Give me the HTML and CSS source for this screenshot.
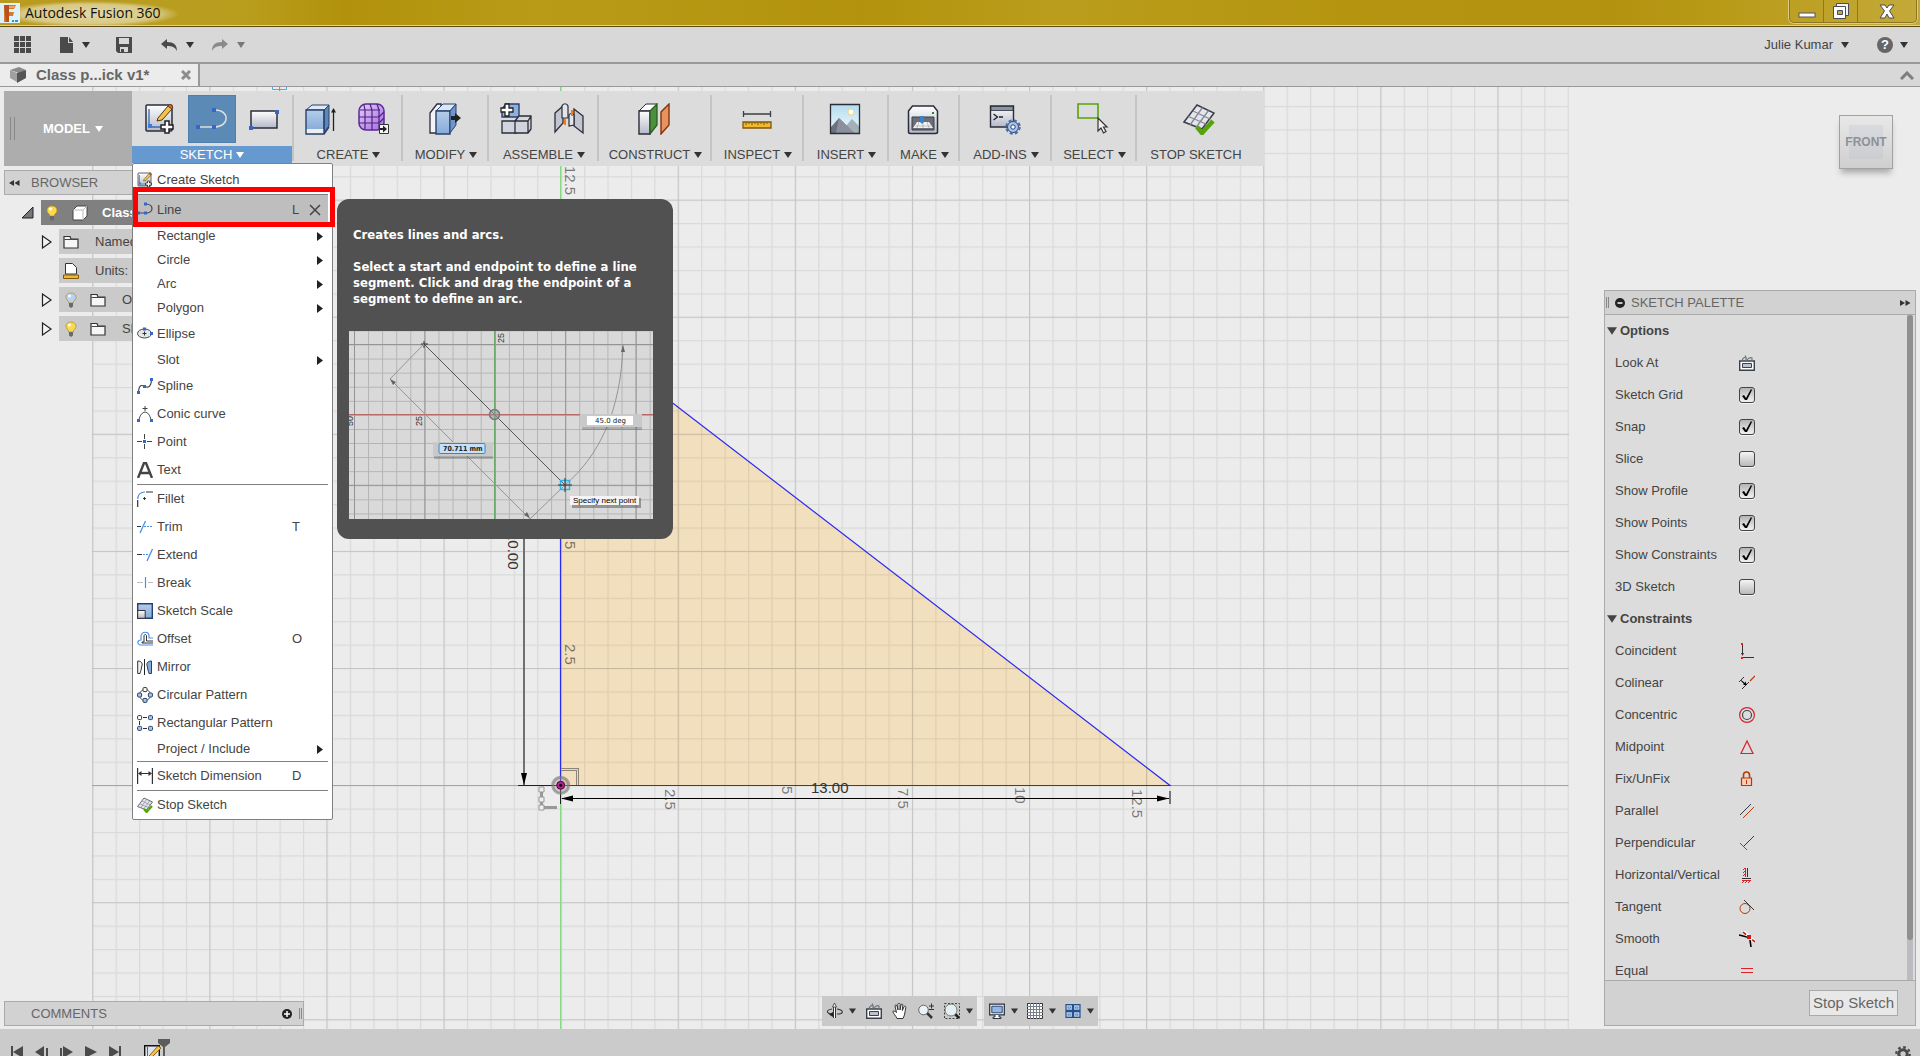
FILE: index.html
```html
<!DOCTYPE html>
<html lang="en">
<head>
<meta charset="utf-8">
<title>Autodesk Fusion 360</title>
<link rel="stylesheet" href="styles.css">
</head>
<body>
<svg class="defs" aria-hidden="true">
  <defs>
    <linearGradient id="gBlue" x1="0" y1="0" x2="0" y2="1"><stop offset="0" stop-color="#b4cdea"/><stop offset="1" stop-color="#86abd9"/></linearGradient>
    <linearGradient id="gGrey" x1="0" y1="0" x2="0" y2="1"><stop offset="0" stop-color="#ffffff"/><stop offset="1" stop-color="#b4b8c8"/></linearGradient>
    <linearGradient id="gSky" x1="0" y1="0" x2="0" y2="1"><stop offset="0" stop-color="#b4dcf0"/><stop offset="1" stop-color="#f2f9fc"/></linearGradient>
    <linearGradient id="gViolet" x1="0" y1="0" x2="1" y2="1"><stop offset="0" stop-color="#e6ccfa"/><stop offset="1" stop-color="#a56be0"/></linearGradient>
    <symbol id="caret" viewBox="0 0 8 6"><path d="M0 0h8L4 6z" fill="currentColor"/></symbol>
    <symbol id="sub" viewBox="0 0 6 9"><path d="M0 0v9l6-4.500z" fill="#222"/></symbol>
    <symbol id="sketch" viewBox="0 0 32 32">
      <rect x="2" y="2" width="26" height="26" rx="1" fill="url(#gGrey)" stroke="#2b2e38" stroke-width="1.500"/>
      <path d="M5 6v18h12" fill="none" stroke="#3a6bb8" stroke-width="1.300"/><rect x="4" y="21" width="4" height="4" fill="#3b7be0"/>
      <path d="M14 15L24 3l4 3-10 11-5 1z" fill="#f6c445" stroke="#4a3517"/><path d="M24 3l4 3 1-2-3-3z" fill="#c66a3b" stroke="#6b3519" stroke-width=".8"/>
      <path d="M21 18h4v4h4v4h-4v4h-4v-4h-4v-4h4z" fill="#fff" stroke="#222" stroke-width="1.500"/>
    </symbol>
    <symbol id="line" viewBox="0 0 32 32">
      <path d="M2 24h16c16 0 16-17 1-17" fill="none" stroke="currentColor" stroke-width="1.500"/>
      <path d="M0 22h4v4H0zM16 22h4v4h-4zM16 5h4v4h-4z" fill="#3567c9"/>
    </symbol>
    <symbol id="line-small" viewBox="0 0 16 16">
      <path d="M1 11h8c8 0 8-9 0-9" fill="none" stroke="#444" stroke-width="1.200"/>
      <path d="M0 9.500h3v3H0zM7 9.500h3v3H7zM7 .5h3v3H7z" fill="#3567c9"/>
    </symbol>
    <symbol id="stop" viewBox="0 0 32 32">
      <path d="M14 2l17 8-12 16L1 19z" fill="#e3e6ec" stroke="#3b3e46" stroke-width="1.500"/>
      <path d="M19.500 4.500L7 22M25.500 7.500L13 24.500M10 8l17 8M5.500 13.500L23 21" stroke="#858a96" stroke-width="1.300" fill="none"/>
      <path d="M14 24l5 6L30 18" fill="none" stroke="#58a30a" stroke-width="4.500"/>
    </symbol>
    <symbol id="folder" viewBox="0 0 16 14">
      <path d="M1 13V1.500h6L8 4h7v9z" fill="#f6f6f8" stroke="#333" stroke-width="1.200"/><path d="M1.500 4.500h13" stroke="#444"/>
    </symbol>
    <symbol id="bulb" viewBox="0 0 12 16">
      <path d="M3.500 9.500C-1 6 1 1 6 1s7 5 2.500 8.500V11h-5z" fill="currentColor" stroke="#b08a2a" stroke-width=".7"/><circle cx="4.500" cy="4" r="1.600" fill="#fff"/><path d="M4 11h4v3.500L6 16l-2-1.500z" fill="#6a6a6a"/>
    </symbol>
    <symbol id="look" viewBox="0 0 16 16">
      <path d="M.7 6h14.600v9.300H.7z" fill="#fff" stroke="#3a414c" stroke-width="1.400"/><path d="M3.500 8.500h9v4h-9z" fill="#bcc3cd" stroke="#3a414c"/><path d="M3 5.500C4 2.500 6 2 7 2.500L6 .5M7 2.500v3M8 5c2-2.500 4-2.500 5-2v3" fill="none" stroke="#68727e" stroke-width="1.100"/>
    </symbol>
  </defs>
</svg>

<header class="titlebar">
  <svg class="app-logo" viewBox="0 0 20 20"><rect width="20" height="20" fill="#dff1f8"/><path d="M4 2h12l-2 4H9v3h5l-1 4H9v6H4z" fill="#d9772c"/><path d="M4 2h5v17H6z" fill="#b4541c"/><path d="M9 3h6l-1 2H9z" fill="#f4a45f"/><path d="M12 17h2v2h-2zM15 17h3v2h-3z" fill="#1f9be0"/></svg>
  <h1 class="app-title">Autodesk Fusion 360</h1>
  <div class="window-controls">
    <button class="win" aria-label="Minimize"><svg width="18" height="6"><rect x="1" y="1" width="16" height="4" fill="#fff" stroke="#55545c"/></svg></button>
    <button class="win" aria-label="Restore"><svg width="18" height="18"><path d="M4.500 1.500h12v12h-12z" fill="#f2f2f2" stroke="#4b4a5c"/><path d="M1.500 4.500h12v12h-12z" fill="#fff" stroke="#4b4a5c"/><path d="M5.500 8.500h5v4h-5z" fill="#c4a535" stroke="#4b4a5c"/></svg></button>
    <button class="win win-close" aria-label="Close"><svg width="16" height="15"><path d="M1 1h5l2 3 2-3h5l-4.500 6L15 14h-5l-2-4-2 4H1l4.500-7z" fill="#fff" stroke="#4b4a5c"/></svg></button>
  </div>
</header>

<nav class="appbar">
  <button class="app-btn" aria-label="Data panel"><svg width="17" height="17" fill="#4a4a4a"><path d="M0 0h5v5H0zM6 0h5v5H6zM12 0h5v5h-5zM0 6h5v5H0zM6 6h5v5H6zM12 6h5v5h-5zM0 12h5v5H0zM6 12h5v5H6zM12 12h5v5h-5z"/></svg></button>
  <button class="app-btn file" aria-label="File"><svg width="14" height="16" fill="#4a4a4a"><path d="M0 0h8v6h5v10H0zM9 0l4 5H9z"/></svg><svg class="caret"><use href="#caret"/></svg></button>
  <button class="app-btn save" aria-label="Save"><svg width="16" height="16"><path d="M0 0h16v16H2l-2-2z" fill="#4a4a4a"/><path d="M3 1h10v6H3zM4 10h8v5H4z" fill="#d8d8d8"/><path d="M5 12h3v3H5z" fill="#4a4a4a"/></svg></button>
  <button class="app-btn undo" aria-label="Undo"><svg width="16" height="12"><path d="M0 5l6-5v3c7 0 10 3 10 9-2-4-5-5-10-5v3z" fill="#4a4a4a"/></svg><svg class="caret"><use href="#caret"/></svg></button>
  <button class="app-btn redo" aria-label="Redo"><svg width="16" height="12"><path d="M16 5l-6-5v3C3 3 0 6 0 12c2-4 5-5 10-5v3z" fill="#8a8a8a"/></svg><svg class="caret"><use href="#caret"/></svg></button>
  <button class="app-btn user">Julie Kumar <svg class="caret"><use href="#caret"/></svg></button>
  <button class="app-btn help" aria-label="Help"><span class="help-mark">?</span><svg class="caret"><use href="#caret"/></svg></button>
</nav>

<div class="tabs">
  <div class="tab">
    <svg width="16" height="16"><path d="M0 3l9-3 7 3-7 3z" fill="#8b8b8b"/><path d="M0 3l7 3v9L0 11z" fill="#a0a0a0"/><path d="M7 6l9-3v8l-9 5z" fill="#555"/></svg>
    <span class="tab-name">Class p...ick v1*</span>
    <button class="tab-close" aria-label="Close tab"><svg width="10" height="10"><path d="M1 1l8 8M9 1L1 9" stroke="#8c8c8c" stroke-width="3"/></svg></button>
  </div>
  <button class="collapse" aria-label="Collapse"><svg width="14" height="9"><path d="M1 8l6-6 6 6" fill="none" stroke="#7e7e7e" stroke-width="3"/></svg></button>
</div>

<main class="workspace">
  <svg class="canvas" role="img" aria-label="Sketch canvas">
    <defs>
      <pattern id="minor" x="92.200" y="82.500" width="23.420" height="23.420" patternUnits="userSpaceOnUse"><path d="M.5 0v23.420M0 .5h23.420" stroke="#000" stroke-opacity=".08" stroke-width="1.400"/></pattern>
      <pattern id="major" x="92.200" y="82.500" width="117.100" height="117.100" patternUnits="userSpaceOnUse"><path d="M.5 0v117.100M0 .5h117.100" stroke="#000" stroke-opacity=".1" stroke-width="1.200"/></pattern>
    </defs>
    <g transform="translate(0 -87)">
      <path d="M560.700 316.700V785.300H1170z" fill="#f2dfbe"/>
      <rect x="92" y="80" width="1477" height="960" fill="url(#minor)"/>
      <rect x="92" y="80" width="1477" height="960" fill="url(#major)"/>
      <path d="M92 785.500h1476" stroke="#e58a8a"/>
      <path d="M560.500 87v942" stroke="#86d886"/>
      <path d="M560.500 785.500V316.700L1170 785.500z" fill="none" stroke="#2a2af0" stroke-width="1.200"/>
      <path d="M272.500 80v9.500h14V80M279.500 80v11" fill="none" stroke="#35b5e8"/>
      <path d="M524 317v468" stroke="#707070" stroke-width="2"/>
      <path d="M521 773h6l-3 12z"/>
      <path d="M518 785.500h43M560.500 785v19" stroke="#222"/>
      <path d="M562 798.500h608" stroke="#000"/>
      <path d="M561 798.500l12-3v6zM1169 798.500l-12-3v6z"/>
      <path d="M1170 791v13" stroke="#777" stroke-width="2"/>
      <path d="M561 769.500h16.500V785" fill="none" stroke="#8d8576" stroke-width="3"/>
      <path d="M561 769.500h16.500V785" fill="none" stroke="#e2dccf"/>
      <path d="M541.500 789v20M541 807.500h16" stroke="#999" stroke-width="3"/>
      <path d="M539 787h5v5h-5zM539 797h5v5h-5zM539 805h5v5h-5z" fill="#eee" stroke="#999"/>
      <circle cx="560.700" cy="785.300" r="8" fill="#999" fill-opacity=".4" stroke="#777" stroke-opacity=".6" stroke-width="3"/>
      <circle cx="560.700" cy="785.300" r="4" fill="#c2189a" stroke="#40102e"/><circle cx="560.700" cy="785.300" r="1.500"/>
      <g class="grid-label">
        <text transform="translate(565 166) rotate(90)">12.5</text>
        <text transform="translate(565 541) rotate(90)">5</text>
        <text transform="translate(565 644) rotate(90)">2.5</text>
        <text transform="translate(665 789) rotate(90)">2.5</text>
        <text transform="translate(782 786) rotate(90)">5</text>
        <text transform="translate(898 788) rotate(90)">7.5</text>
        <text transform="translate(1015 787) rotate(90)">10</text>
        <text transform="translate(1132 789) rotate(90)">12.5</text>
      </g>
      <g class="dim-label">
        <text transform="translate(508 532) rotate(90)">10.00</text>
        <text x="811" y="793">13.00</text>
      </g>
    </g>
  </svg>

  <div class="toolbar">
    <button class="mode">MODEL <svg class="caret"><use href="#caret"/></svg></button>
    <section class="group g-sketch">
      <div class="tools">
        <button class="tool" aria-label="Create sketch"><svg class="ico"><use href="#sketch"/></svg></button>
        <button class="tool active" aria-label="Line"><svg class="ico"><use href="#line"/></svg></button>
        <button class="tool" aria-label="Rectangle"><svg class="ico" viewBox="0 0 32 32"><rect x="3" y="8" width="26" height="17" fill="url(#gGrey)" stroke="#2b2e38" stroke-width="1.500"/><path d="M1 23h4v4H1zM27 7h4v4h-4z" fill="#3567c9"/></svg></button>
      </div>
      <button class="group-name open">SKETCH<svg class="caret"><use href="#caret"/></svg></button>

      <ul class="menu">
        <li class="item"><svg class="mi"><use href="#sketch"/></svg><button>Create Sketch</button></li>
        <li class="item current">
          <svg class="mi"><use href="#line-small"/></svg><button>Line</button><kbd>L</kbd>
          <svg class="pin" viewBox="0 0 12 12"><path d="M1 1l10 10M11 1L1 11" stroke="#444" stroke-width="1.500"/></svg>
          <span class="marker"></span>
          <aside class="tooltip">
            <p>Creates lines and arcs.</p>
            <p>Select a start and endpoint to define a line segment. Click and drag the endpoint of a segment to define an arc.</p>
            <svg class="demo" viewBox="0 0 304 188">
              <defs>
                <pattern id="dminor" x="5" y="13.500" width="14.080" height="14.080" patternUnits="userSpaceOnUse"><path d="M.5 0v14.080M0 .5h14.080" stroke="#b4b4b4"/></pattern>
                <pattern id="dmajor" x="5" y="13" width="70.400" height="70.400" patternUnits="userSpaceOnUse"><path d="M.5 0v70.400M0 .5h70.400" stroke="#949494"/></pattern>
              </defs>
              <rect width="304" height="188" fill="#d9d9d9"/><rect width="304" height="188" fill="url(#dminor)"/><rect width="304" height="188" fill="url(#dmajor)"/>
              <path d="M0 83.500h304" stroke="#b86a6a"/><path d="M145.500 0v188" stroke="#6aa96a"/>
              <path d="M75 13l141 141" stroke="#555"/><path d="M72 13h7M75 10v7" stroke="#333"/>
              <path d="M75 13L41 48l140 140 35-34C250 125 272 80 274 14" fill="none" stroke="#959595"/>
              <path d="M41 48l6 3-3 3zM181 187l-6-3 3-3zM274 14l-2 7h4z" fill="#666"/>
              <circle cx="145.500" cy="83.500" r="5" fill="#999" fill-opacity=".6" stroke="#777" stroke-width="1.500"/>
              <path d="M211.500 149.500h9v9h-9z" fill="none" stroke="#2fb4e8" stroke-width="1.500"/><path d="M209 154h14M216 147v14" stroke="#333"/>
              <g class="demo-num"><text transform="translate(155 12) rotate(-90)">25</text><text transform="translate(73 95) rotate(-90)">25</text><text transform="translate(4 95) rotate(-90)">50</text></g>
              <path d="M85 114h59v14H85zM233 86h60v13h-60z" fill="#000" fill-opacity=".2"/>
              <path d="M84 111h60v14H84zM231 83h62v13h-62z" fill="#c9c9c9"/>
              <rect x="90" y="112.500" width="46" height="10" rx="1" fill="#c4e0fb" stroke="#3f83c4"/><rect x="238" y="85" width="46" height="9" fill="#fff"/>
              <rect x="223" y="167" width="69" height="10" fill="#666" fill-opacity=".6"/><rect x="221" y="165" width="69" height="9" fill="#f4f4f4"/>
              <g class="demo-text"><text class="demo-strong" x="94" y="120">70.711 mm</text><text x="246" y="92">45.0 deg</text><text class="demo-hint" x="224" y="172">Specify next point</text></g>
            </svg>
          </aside>
        </li>
        <li class="item plain"><button>Rectangle</button><svg class="sub"><use href="#sub"/></svg></li>
        <li class="item plain"><button>Circle</button><svg class="sub"><use href="#sub"/></svg></li>
        <li class="item plain"><button>Arc</button><svg class="sub"><use href="#sub"/></svg></li>
        <li class="item plain"><button>Polygon</button><svg class="sub"><use href="#sub"/></svg></li>
        <li class="item"><svg class="mi" viewBox="0 0 16 16"><ellipse cx="7.500" cy="7.500" rx="7" ry="4.500" fill="#e4e6ea" stroke="#444"/><path d="M5.500 7.500h4M7.500 5.500v4" stroke="#333"/><path d="M6 1.500h3v3H6zM13 6h3v3h-3z" fill="#3567c9"/></svg><button>Ellipse</button></li>
        <li class="item plain"><button>Slot</button><svg class="sub"><use href="#sub"/></svg></li>
        <li class="item"><svg class="mi" viewBox="0 0 16 16"><path d="M1.500 14C2 6 5 7 8 8.500S14 9 14.500 2" fill="none" stroke="#444" stroke-width="1.200"/><path d="M0 13h3v3H0zM6 7h3v3H6zM13 0h3v3h-3z" fill="#3567c9"/></svg><button>Spline</button></li>
        <li class="item"><svg class="mi" viewBox="0 0 16 16"><path d="M2 14C4 3.500 12 3.500 14 14" fill="none" stroke="#444"/><path d="M5.500 2.500h5M8 0v5" stroke="#444"/><path d="M0 13h3v3H0zM13 13h3v3h-3z" fill="#3567c9"/></svg><button>Conic curve</button></li>
        <li class="item"><svg class="mi" viewBox="0 0 16 16"><path d="M0 7.500h5M10 7.500h5M7.500 0v5M7.500 10v5" stroke="#444"/><path d="M6 6h3v3H6z" fill="#3567c9"/></svg><button>Point</button></li>
        <li class="item"><svg class="mi" viewBox="0 0 16 16"><path d="M1 16L7 1h2l6 15M3.500 11h9" fill="none" stroke="#444" stroke-width="2.400"/></svg><button>Text</button></li>
        <li class="rule"></li>
        <li class="item"><svg class="mi" viewBox="0 0 16 16"><path d="M.7 9v7M9 1h7" stroke="#333" stroke-width="1.200"/><path d="M.7 8C1 3 3 1 8 1" fill="none" stroke="#4a8fe8" stroke-width="1.200"/><path d="M6 7.500h3M7.500 6v3" stroke="#333"/></svg><button>Fillet</button></li>
        <li class="item"><svg class="mi" viewBox="0 0 16 16"><path d="M0 7.500h4" stroke="#333"/><path d="M3 14L8.500 2" stroke="#4a8fe8" stroke-width="1.300"/><path d="M7 7.500h9" stroke="#4a8fe8" stroke-dasharray="2 1"/></svg><button>Trim</button><kbd>T</kbd></li>
        <li class="item"><svg class="mi" viewBox="0 0 16 16"><path d="M0 7.500h5" stroke="#333"/><path d="M10 14l5.500-12" stroke="#4a8fe8" stroke-width="1.300"/><path d="M6 7.500h6" stroke="#4a8fe8" stroke-dasharray="2 1"/></svg><button>Extend</button></li>
        <li class="item"><svg class="mi" viewBox="0 0 16 16"><path d="M0 7.500h6M11 7.500h5" stroke="#bbb"/><path d="M8.500 2v11" stroke="#4a8fe8" stroke-width="1.200"/></svg><button>Break</button></li>
        <li class="item"><svg class="mi" viewBox="0 0 16 16"><path d="M.7 .7h14.600v14.600H.7z" fill="url(#gBlue)" stroke="#28406e" stroke-width="1.400"/><path d="M.7 7.500h7.500v7.800H.7z" fill="url(#gGrey)" stroke="#333"/></svg><button>Sketch Scale</button></li>
        <li class="item"><svg class="mi" viewBox="0 0 16 16"><path d="M16 14H3c-3-1-3-5 1-5V5c1-5 8-5 8 0v2h4" fill="none" stroke="#4a8fe8" stroke-width="1.200"/><path d="M16 12H5v-1h2V5c0-2 2.500-2 2.500 0v5H16" fill="none" stroke="#333"/></svg><button>Offset</button><kbd>O</kbd></li>
        <li class="item"><svg class="mi" viewBox="0 0 16 16"><path d="M.7 2C5 2 6 5 4.500 8c0 3-1 4-1.500 6.500H.7z" fill="#f2f2f2" stroke="#333"/><path d="M7.500 0v16" stroke="#222"/><path d="M14.500 2C10 2 9 5 10.500 8c0 3 1 4 1.500 6.500h2.500z" fill="#86abd9" stroke="#28406e"/></svg><button>Mirror</button></li>
        <li class="item"><svg class="mi" viewBox="0 0 16 16"><circle cx="8" cy="8" r="5.500" fill="none" stroke="#555"/><g stroke="#28406e" fill="#a9c5e8"><rect x=".6" y="6" width="4" height="4" rx="1"/><rect x="11.400" y="6" width="4" height="4" rx="1"/><rect x="6" y="11.400" width="4" height="4" rx="1"/><rect x="6" y=".6" width="4" height="4" rx="1" fill="#fff" stroke="#333"/></g></svg><button>Circular Pattern</button></li>
        <li class="item"><svg class="mi" viewBox="0 0 16 16"><path d="M6 2.500h4M2.500 6v4M6 13.500h4" stroke="#333"/><g stroke="#28406e" fill="#a9c5e8"><rect x="11.500" y=".6" width="4" height="4" rx="1"/><rect x=".6" y="11.400" width="4" height="4" rx="1"/><rect x="11.500" y="11.400" width="4" height="4" rx="1"/><rect x=".6" y=".6" width="4" height="4" rx="1" fill="#fff" stroke="#333"/></g></svg><button>Rectangular Pattern</button></li>
        <li class="item plain"><button>Project / Include</button><svg class="sub"><use href="#sub"/></svg></li>
        <li class="rule"></li>
        <li class="item"><svg class="mi" viewBox="0 0 16 16"><path d="M.6 0v16M15.400 0v16M2 5.500h12" stroke="#333" stroke-width="1.200"/><path d="M1 5.500L4.500 3v5zM15 5.500L11.500 3v5z" fill="#333"/></svg><button>Sketch Dimension</button><kbd>D</kbd></li>
        <li class="rule"></li>
        <li class="item"><svg class="mi"><use href="#stop"/></svg><button>Stop Sketch</button></li>
      </ul>
    </section>
    <section class="group g-create">
      <div class="tools">
        <button class="tool" aria-label="Extrude"><svg class="ico" viewBox="0 0 32 32"><path d="M1 7l6-5h17l-5 5z" fill="#dfeaf7" stroke="#28406e"/><path d="M1 7h18v20H1z" fill="url(#gBlue)"/><path d="M19 7l5-5v21l-5 6z" fill="#5f86b8" stroke="#28406e"/><path d="M1 26h18v5H1z" fill="#eee"/><path d="M1 31V7h18v24zM19 31l5-7" fill="none" stroke="#28406e" stroke-width="1.400"/><path d="M28.500 28V7" stroke="#222" stroke-width="1.300"/><path d="M26 9.500L28.500 5 31 9.500z" fill="#222"/></svg></button>
        <button class="tool" aria-label="Form"><svg class="ico" viewBox="0 0 32 32"><rect x="2" y="1" width="25" height="26" rx="7" fill="url(#gViolet)" stroke="#5b2a96" stroke-width="1.500"/><path d="M2 14h20l5-5M3 7h20M8 7v19M15 7v20M22 7v19M7 2l1 5M13 1l2 6M20 1l2 6M2 20h20l5-5" stroke="#4a2480" fill="none" stroke-width="1.200"/><path d="M22.500 21.500h9v9h-9z" fill="#f4f4f4" stroke="#333"/><path d="M23 25h3v-2.500L30 26l-4 3.500V27h-3z" fill="#222"/></svg></button>
      </div>
      <button class="group-name">CREATE<svg class="caret"><use href="#caret"/></svg></button>
    </section>
    <section class="group g-modify">
      <div class="tools"><button class="tool" aria-label="Press pull"><svg class="ico" viewBox="0 0 32 32"><path d="M1 10l7-9h4v29H1z" fill="#f3f4f7" stroke="#2b2e38" stroke-width="1.300"/><path d="M7 8l7-7h13l-6 7z" fill="#dbe7f5" stroke="#28406e"/><path d="M7 8h14v23H7z" fill="url(#gBlue)" stroke="#28406e" stroke-width="1.400"/><path d="M21 8l6-7v21l-6 8z" fill="#6f96c8" stroke="#28406e"/><path d="M22 13h4v-3l6 5-6 5v-3h-4z" fill="#222"/></svg></button></div>
      <button class="group-name">MODIFY<svg class="caret"><use href="#caret"/></svg></button>
    </section>
    <section class="group g-assemble">
      <div class="tools">
        <button class="tool" aria-label="New component"><svg class="ico" viewBox="0 0 32 32"><path d="M2 6l4-5h13v13H2z" fill="#8fb0df" stroke="#28406e" stroke-width="1.400"/><path d="M2 18h14v12H2z" fill="#d3d5de" stroke="#2b2e38" stroke-width="1.300"/><path d="M15 18l4-5h12v13l-3 4H15zM15 18h13l3-5M28 18v12" fill="#d3d5de" stroke="#2b2e38" stroke-width="1.300"/><path d="M5 1h4v4h4v4H9v4H5V9H1V5h4z" fill="#fff" stroke="#222" stroke-width="1.300"/></svg></button>
        <button class="tool" aria-label="Joint"><svg class="ico" viewBox="0 0 32 32"><path d="M2 10l8-7v17l-8 9z" fill="#c2c6d0" stroke="#2b2e38" stroke-width="1.300"/><path d="M9 3c1-3 5-3 6 0v12H9z" fill="#e3e5ea" stroke="#2b2e38" stroke-width="1.200"/><path d="M21 6l9 7v17l-9-7z" fill="#c2c6d0" stroke="#2b2e38" stroke-width="1.300"/><path d="M16 12c1-2 4-2 5 0v10l-5 1z" fill="#e3e5ea" stroke="#2b2e38" stroke-width="1.200"/><path d="M12 16v6M19 7v6" stroke="#f47a14" stroke-width="2"/></svg></button>
      </div>
      <button class="group-name">ASSEMBLE<svg class="caret"><use href="#caret"/></svg></button>
    </section>
    <section class="group g-construct">
      <div class="tools"><button class="tool" aria-label="Offset plane"><svg class="ico" viewBox="0 0 32 32"><path d="M1 8l7-7h11l-7 7z" fill="#fff" stroke="#2b2e38"/><path d="M1 8h11v23H1z" fill="url(#gGrey)" stroke="#2b2e38" stroke-width="1.400"/><path d="M12 8l7-7v21l-7 9z" fill="#4c8f3c" stroke="#2f5a22" stroke-width="1.300"/><path d="M23 9l8-8v21l-8 9z" fill="#e8935e" stroke="#82330d" stroke-width="1.400"/></svg></button></div>
      <button class="group-name">CONSTRUCT<svg class="caret"><use href="#caret"/></svg></button>
    </section>
    <section class="group g-inspect">
      <div class="tools"><button class="tool" aria-label="Measure"><svg class="ico" viewBox="0 0 32 32"><path d="M2.500 8v6M29.500 8v6M3 11h26" stroke="#3b3e46" stroke-width="1.300"/><path d="M2 19h28v6H2z" fill="#eeb92c" stroke="#83560a" stroke-width="1.300"/><path d="M5 19v3M8 19v2M11 19v3M14 19v2M17 19v3M20 19v2M23 19v3M26 19v2" stroke="#83560a"/></svg></button></div>
      <button class="group-name">INSPECT<svg class="caret"><use href="#caret"/></svg></button>
    </section>
    <section class="group g-insert">
      <div class="tools"><button class="tool" aria-label="Insert decal"><svg class="ico" viewBox="0 0 32 32"><path d="M1.500 1.500h29v29h-29z" fill="url(#gSky)"/><circle cx="22" cy="9" r="3" fill="#fff" stroke="#f5d670"/><path d="M16 24l7-8 7 7v8H16z" fill="#a3b0b8"/><path d="M2 24l8-9 15 15H2z" fill="#6c7180"/><path d="M10 15l-3 15h18z" fill="#8c909c"/><path d="M1.500 1.500h29v29h-29z" fill="none" stroke="#2b2e38" stroke-width="1.300"/></svg></button></div>
      <button class="group-name">INSERT<svg class="caret"><use href="#caret"/></svg></button>
    </section>
    <section class="group g-make">
      <div class="tools"><button class="tool" aria-label="3D print"><svg class="ico" viewBox="0 0 32 32"><path d="M1.500 8l4-5h21l4 5v21q0 1.500-2 1.500h-25q-2 0-2-1.500z" fill="url(#gGrey)" stroke="#2b2e38" stroke-width="1.500"/><path d="M5 14h22v13H5z" fill="#6b6e77" stroke="#3b3e46"/><path d="M10 19h12l4 6H6z" fill="#f2f2f4"/><path d="M8 23h16M12 19l-2 6M16 19v6M20 19l2 6" stroke="#aaa" stroke-width=".7"/><path d="M13 13h4v6l-2 2-2-2z" fill="#3b82c8"/><path d="M25 9h2v2h-2z" fill="#1c8a1c"/></svg></button></div>
      <button class="group-name">MAKE<svg class="caret"><use href="#caret"/></svg></button>
    </section>
    <section class="group g-addins">
      <div class="tools"><button class="tool" aria-label="Scripts and add-ins"><svg class="ico" viewBox="0 0 32 32"><path d="M1.500 3h23v21h-23z" fill="url(#gGrey)" stroke="#2b2e38" stroke-width="1.400"/><path d="M2 3.500h22v4H2z" fill="#8b93a6" stroke="#2b2e38" stroke-width=".8"/><path d="M4.500 11l4 3-4 3M10 14h4" stroke="#222" fill="none" stroke-width="1.300"/><circle cx="24" cy="24" r="5.500" fill="#a9c5e8" stroke="#28406e"/><circle cx="24" cy="24" r="6.500" fill="none" stroke="#4a6ea8" stroke-width="2.500" stroke-dasharray="3 2.100"/><circle cx="24" cy="24" r="2.200" fill="#fff" stroke="#28406e"/></svg></button></div>
      <button class="group-name">ADD-INS<svg class="caret"><use href="#caret"/></svg></button>
    </section>
    <section class="group g-select">
      <div class="tools"><button class="tool" aria-label="Select"><svg class="ico" viewBox="0 0 32 32"><path d="M1 1h20v14H1z" fill="none" stroke="#58a30a" stroke-width="1.600"/><path d="M21 15v13l3-3 2.500 5 2.500-1.500-2.500-4.500H30z" fill="#f0f0f0" stroke="#333" stroke-width="1.200"/></svg></button></div>
      <button class="group-name">SELECT<svg class="caret"><use href="#caret"/></svg></button>
    </section>
    <section class="group g-stop">
      <div class="tools"><button class="tool" aria-label="Stop sketch"><svg class="ico"><use href="#stop"/></svg></button></div>
      <button class="group-name">STOP SKETCH</button>
    </section>
  </div>

  <section class="browser">
    <h2 class="bar"><svg width="11" height="6"><path d="M5 0v6L0 3zM10.500 0v6l-5-3z" fill="#333"/></svg>BROWSER</h2>
    <ul class="tree">
      <li class="node root"><svg class="twist" viewBox="0 0 12 12"><path d="M11 0v11H0z" fill="#777" stroke="#222"/></svg><div class="row"><svg class="bulb on"><use href="#bulb"/></svg><svg class="cube" viewBox="0 0 16 16"><path d="M1 5l4-4h10v10l-4 4H1z" fill="#fff" stroke="#444"/><path d="M1 5h10l4-4M11 5v10" stroke="#bbb" fill="none"/></svg><b>Class project stick v1</b></div></li>
      <li class="node"><svg class="twist" viewBox="0 0 12 14"><path d="M1.500 1v12L10 7z" fill="#f4f4f4" stroke="#222" stroke-width="1.200"/></svg><div class="row"><svg class="folder"><use href="#folder"/></svg><span>Named Views</span></div></li>
      <li class="node leaf"><div class="row"><svg class="folder" viewBox="0 0 16 16"><path d="M2.500 11V.5h7l4 4V11z" fill="#fff" stroke="#333"/><path d="M.5 12h15v3.500H.5z" fill="#f0bb2a" stroke="#83560a"/></svg><span>Units: in</span></div></li>
      <li class="node"><svg class="twist" viewBox="0 0 12 14"><path d="M1.500 1v12L10 7z" fill="#f4f4f4" stroke="#222" stroke-width="1.200"/></svg><div class="row lit"><svg class="bulb off"><use href="#bulb"/></svg><svg class="folder"><use href="#folder"/></svg><span>Origin</span></div></li>
      <li class="node"><svg class="twist" viewBox="0 0 12 14"><path d="M1.500 1v12L10 7z" fill="#f4f4f4" stroke="#222" stroke-width="1.200"/></svg><div class="row lit"><svg class="bulb on"><use href="#bulb"/></svg><svg class="folder"><use href="#folder"/></svg><span>Sketches</span></div></li>
    </ul>
  </section>

  <div class="side">
    <button class="viewcube">FRONT</button>
    <section class="palette">
      <h2 class="bar palette-bar"><span class="grip"></span><svg width="10" height="10"><circle cx="5" cy="5" r="5" fill="#222"/><path d="M2.500 5h5" stroke="#fff" stroke-width="1.500"/></svg>SKETCH PALETTE<svg class="expand" width="11" height="6"><path d="M0 0v6l5-3zM5.500 0v6l5-3z" fill="#333"/></svg></h2>
      <div class="palette-body">
        <div class="palette-list">
          <h3><svg class="fold"><use href="#caret"/></svg>Options</h3>
          <div class="opt"><span>Look At</span><button aria-label="Look At"><svg class="ci"><use href="#look"/></svg></button></div>
          <div class="opt"><label for="o1">Sketch Grid</label><input type="checkbox" id="o1" checked></div>
          <div class="opt"><label for="o2">Snap</label><input type="checkbox" id="o2" checked></div>
          <div class="opt"><label for="o3">Slice</label><input type="checkbox" id="o3"></div>
          <div class="opt"><label for="o4">Show Profile</label><input type="checkbox" id="o4" checked></div>
          <div class="opt"><label for="o5">Show Points</label><input type="checkbox" id="o5" checked></div>
          <div class="opt"><label for="o6">Show Constraints</label><input type="checkbox" id="o6" checked></div>
          <div class="opt"><label for="o7">3D Sketch</label><input type="checkbox" id="o7"></div>
          <h3><svg class="fold"><use href="#caret"/></svg>Constraints</h3>
          <div class="opt"><span>Coincident</span><button aria-label="Coincident"><svg class="ci" viewBox="0 0 16 16"><path d="M3.500 2v10M4 14.500h11" stroke="#333"/><path d="M2 10h3l-1.500 3z" fill="#333"/><path d="M2 0h2v2H2zM2 14h2v2H2z" fill="#e8220e"/></svg></button></div>
          <div class="opt"><span>Colinear</span><button aria-label="Colinear"><svg class="ci" viewBox="0 0 16 16"><path d="M0 7l5-5M3 14l7-7" stroke="#333"/><path d="M11 6l5-5" stroke="#b8380a" stroke-width="1.200"/><path d="M2 5l4 3V6l2 4H4l1-1-3-3z"/></svg></button></div>
          <div class="opt"><span>Concentric</span><button aria-label="Concentric"><svg class="ci" viewBox="0 0 16 16" fill="none"><circle cx="8" cy="8" r="7.400" stroke="#d8232b" stroke-width="1.200"/><circle cx="8" cy="8" r="4.500" stroke="#3b4452" stroke-width="1.200"/></svg></button></div>
          <div class="opt"><span>Midpoint</span><button aria-label="Midpoint"><svg class="ci" viewBox="0 0 16 16"><path d="M8 2L2 14.500h12z" fill="none" stroke="#d8232b" stroke-width="1.200"/></svg></button></div>
          <div class="opt"><span>Fix/UnFix</span><button aria-label="Fix/UnFix"><svg class="ci" viewBox="0 0 16 16"><path d="M4.500 7V4c0-4 6-4 6 0v3" fill="none" stroke="#b8380a" stroke-width="1.600"/><path d="M2.500 7h10v7.500h-10z" fill="#f8cdb4" stroke="#b8380a" stroke-width="1.200"/><path d="M7.500 9v4" stroke="#b8380a"/></svg></button></div>
          <div class="opt"><span>Parallel</span><button aria-label="Parallel"><svg class="ci" viewBox="0 0 16 16"><path d="M1 12L12 1" stroke="#333b48"/><path d="M4 15L15 4" stroke="#b8380a"/></svg></button></div>
          <div class="opt"><span>Perpendicular</span><button aria-label="Perpendicular"><svg class="ci" viewBox="0 0 16 16"><path d="M5 11L15 1" stroke="#333b48"/><path d="M1 8l7 7" stroke="#b8380a"/></svg></button></div>
          <div class="opt"><span>Horizontal/Vertical</span><button aria-label="Horizontal/Vertical"><svg class="ci" viewBox="0 0 16 16"><path d="M8.500 1v9M3 11.500h9" stroke="#333"/><path d="M6.500 1v9M3 13.500h9" stroke="#d8232b"/><path d="M4 3l2-2M4 6l2-2M4 9l2-2M3 16l2-2M6 16l2-2M9 16l2-2" stroke="#d8232b"/></svg></button></div>
          <div class="opt"><span>Tangent</span><button aria-label="Tangent"><svg class="ci" viewBox="0 0 16 16"><circle cx="6" cy="9.500" r="5" fill="none" stroke="#b8380a"/><path d="M5 1l10 10" stroke="#333"/></svg></button></div>
          <div class="opt"><span>Smooth</span><button aria-label="Smooth"><svg class="ci" viewBox="0 0 16 16"><path d="M0 4l8 2M11 9l1 7" stroke="#000" stroke-width="1.600" fill="none"/><path d="M4 0l12 11" stroke="#fff" stroke-width="3"/><path d="M4 1l12 10" stroke="#c01010" stroke-width="1.600" stroke-dasharray="4 2"/><path d="M8 4h4v4H8z" fill="#e01010"/></svg></button></div>
          <div class="opt"><span>Equal</span><button aria-label="Equal"><svg class="ci" viewBox="0 0 16 16"><path d="M2 5.500h12M2 9.500h12" stroke="#d8232b" stroke-width="1.200"/></svg></button></div>
        </div>
        <div class="scroll"><div class="thumb"></div></div>
      </div>
      <footer class="palette-foot"><button class="stop-btn">Stop Sketch</button></footer>
    </section>
  </div>

  <h2 class="bar comments">COMMENTS<svg class="plus" width="10" height="10"><circle cx="5" cy="5" r="5" fill="#222"/><path d="M2 5h6M5 2v6" stroke="#fff" stroke-width="1.500"/></svg><span class="grip"></span></h2>

  <div class="navbar">
    <div class="nav-group">
      <button aria-label="Orbit"><svg class="ci" viewBox="0 0 16 16"><path d="M7.500 15V3" stroke="#333" stroke-width="3"/><path d="M7.500 15V3" stroke="#fff"/><path d="M5.500 4l2-4 2 4z" fill="#fff" stroke="#333" stroke-width=".8"/><path d="M5 6C-1 7-1 10 4 11M10 6c7 1 7 5 0 5" fill="none" stroke="#333" stroke-width="1.200"/><path d="M2 11.500L6 9v5z" fill="#222"/></svg><svg class="caret"><use href="#caret"/></svg></button>
      <button aria-label="Look at"><svg class="ci"><use href="#look"/></svg></button>
      <button aria-label="Pan"><svg class="ci" viewBox="0 0 16 16"><path d="M5 15.500C4 13 1 10 .8 8.500 2 7 4 9 4.500 9.500L3 3c0-1.500 1.800-1.500 2 0l1 4-.2-5.500C6-.2 8-.2 8 1.500V7l1-5c.3-1.500 2-1.200 1.800.3L10.300 7.500l1.700-3.700c.6-1.200 2.300-.6 1.800.8C13 8 13 12 11 15.500z" fill="#fff" stroke="#333"/></svg></button>
      <button aria-label="Zoom"><svg class="ci" viewBox="0 0 16 16"><path d="M9 10l5 5" stroke="#333" stroke-width="2.500"/><circle cx="5.500" cy="7" r="4.800" fill="#e8f2f8" stroke="#666"/><path d="M11 3h5M13.500.5v5M11 6.500h5" stroke="#333"/></svg></button>
      <button aria-label="Fit"><svg class="ci" viewBox="0 0 16 16"><path d="M.5.500h15v15H.5z" fill="none" stroke="#444" stroke-dasharray="2 1.500"/><path d="M11 11l4 4" stroke="#222" stroke-width="2.500"/><circle cx="7" cy="7" r="6" fill="#e2f0f4" stroke="#777"/></svg><svg class="caret"><use href="#caret"/></svg></button>
    </div>
    <div class="nav-group wide">
      <button aria-label="Display"><svg class="ci" viewBox="0 0 16 16"><path d="M.7 1.200h14.600v10.600H.7z" fill="#fff" stroke="#2b3340" stroke-width="1.300"/><path d="M2.800 3.200h10.400v6.600H2.800z" fill="#94b8e2" stroke="#28406e"/><path d="M6 12v2H4v1.500h8V14h-2v-2" fill="#fff" stroke="#2b3340"/></svg><svg class="caret"><use href="#caret"/></svg></button>
      <button aria-label="Grid"><svg class="ci" viewBox="0 0 16 16"><path d="M.5.500h15v15H.5z" fill="#fff" stroke="#333"/><path d="M3.500 0v16M6.500 0v16M9.500 0v16M12.500 0v16M0 3.500h16M0 6.500h16M0 9.500h16M0 12.500h16" stroke="#777e8c"/></svg><svg class="caret"><use href="#caret"/></svg></button>
      <button aria-label="Viewports"><svg class="ci" viewBox="0 0 16 16"><path d="M1 1.700h6.500v5.600H1zM8.500 1.700H15v5.600H8.500zM1 8.700h6.500v5.600H1zM8.500 8.700H15v5.600H8.500z" fill="#b9d0ee" stroke="#28508c" stroke-width="1.200"/><path d="M3 4h2.500v1.200H3zM10.500 4H13v1.200h-2.500zM3 11h2.500v1.200H3zM10.500 11H13v1.200h-2.500z" fill="#fff" stroke="#4d78b4" stroke-width=".8"/></svg><svg class="caret"><use href="#caret"/></svg></button>
    </div>
  </div>
</main>

<footer class="timeline">
  <button aria-label="To start"><svg width="12" height="12"><path d="M0 0h2v12H0zM12 0v12L2 6z" fill="#4a4a4a"/></svg></button>
  <button aria-label="Step back"><svg width="13" height="12"><path d="M9 0v12L0 6zM11 2h2v8h-2z" fill="#4a4a4a"/></svg></button>
  <button aria-label="Step forward"><svg width="13" height="12"><path d="M3 0v12l10-6zM0 2h2v8H0z" fill="#4a4a4a"/></svg></button>
  <button aria-label="Play"><svg width="12" height="12"><path d="M0 0v12l12-6z" fill="#4a4a4a"/></svg></button>
  <button aria-label="To end"><svg width="12" height="12"><path d="M0 0v12l10-6zM10 0h2v12h-2z" fill="#4a4a4a"/></svg></button>
  <button class="feature" aria-label="Sketch feature"><svg width="26" height="24"><path d="M.7 6.700h14.600v14.600H.7z" fill="#dfe4f0" stroke="#111" stroke-width="1.400"/><path d="M3.500 8v11h9" stroke="#3a6bb8" fill="none"/><path d="M5 17l9-10 3 2-9 9z" fill="#f6c445" stroke="#8a6416"/><path d="M14 0h12v4l-5 4v16h-2V8l-5-4z" fill="#5b5b5b"/></svg></button>
  <button class="gear" aria-label="Timeline settings"><svg width="16" height="16" viewBox="0 0 16 16"><circle cx="8" cy="8" r="4.200" fill="none" stroke="#4a4a4a" stroke-width="3"/><circle cx="8" cy="8" r="6.700" fill="none" stroke="#4a4a4a" stroke-width="2.400" stroke-dasharray="2.630 2.630"/></svg></button>
</footer>
</body>
</html>
```
FILE: styles.css
```css
* { box-sizing: border-box; }

body {
  margin: 0;
  height: 100vh;
  display: flex;
  flex-direction: column;
  overflow: hidden;
  font: 13px/16px "Liberation Sans", Arial, sans-serif;
  color: #444;
  background: #ececec;
}

button {
  border: 0;
  padding: 0;
  background: none;
  font: inherit;
  color: inherit;
  display: flex;
  align-items: center;
  white-space: nowrap;
}

svg { flex: none; display: block; }
h1, h2, h3, p, ul { margin: 0; padding: 0; font: inherit; }
ul { list-style: none; }
.defs { position: absolute; width: 0; height: 0; }
.caret { width: 8px; height: 6px; color: #333; }

/* title bar */
.titlebar {
  height: 27px;
  flex: none;
  display: flex;
  align-items: center;
  gap: 5px;
  border-bottom: 1px solid #5c4c12;
  box-shadow: inset 0 -1px #e3d28a;
  background:
    radial-gradient(closest-side, rgb(255 255 255 / .6), rgb(255 255 255 / .45) 75%, transparent) 0 1px / 180px 26px no-repeat,
    linear-gradient(90deg, #b89b20 0, #b99e1e 12%, #b2920c 18%, #b99b18 28%, #b3930d 45%, #ba9d1c 55%, #b59510 70%, #b39210 84%, #b99b18 90%, #c3a93a);
}
.app-logo { width: 20px; height: 20px; }
.app-title { color: #111; font: 14px/20px "Open Sans", sans-serif; }
.window-controls {
  display: flex;
  align-self: flex-start;
  margin-left: auto;
  margin-right: 3px;
  height: 23px;
  border: 1px solid #8e7722;
  border-top: 0;
  border-radius: 0 0 5px 5px;
  box-shadow: 0 0 0 1px #dccb86;
}
.win { width: 34px; justify-content: center; border-right: 1px solid #8e7722; }
.win:first-child { padding-top: 8px; }
.win-close { width: 58px; border-right: 0; }

/* application bar */
.appbar {
  height: 37px;
  flex: none;
  display: flex;
  align-items: center;
  padding: 0 12px 0 14px;
  background: #d8d8d8;
  border-bottom: 2px solid #999;
}
.app-btn { gap: 8px; }
.file { margin-left: 29px; }
.save { margin-left: 26px; }
.undo { margin-left: 29px; gap: 9px; }
.redo { margin-left: 18px; gap: 9px; }
.redo .caret { color: #777; }
.user { margin-left: auto; }
.help { margin-left: 28px; gap: 7px; }
.help-mark {
  width: 16px;
  height: 16px;
  border-radius: 50%;
  background: #666;
  color: #fff;
  font-weight: bold;
  text-align: center;
}

/* document tabs */
.tabs {
  height: 23px;
  flex: none;
  display: flex;
  justify-content: space-between;
  background: #d8d8d8;
  border-bottom: 1px solid #999;
}
.tab {
  width: 200px;
  display: flex;
  align-items: center;
  padding: 0 7px 0 10px;
  gap: 10px;
  background: #ececec;
  border-right: 2px solid #999;
}
.tab-name { font-size: 15px; font-weight: bold; color: #666; }
.tab-close { margin-left: auto; }
.collapse { margin-right: 6px; }

/* workspace */
.workspace {
  flex: 1;
  min-height: 0;
  position: relative;
  display: grid;
  grid-template-columns: 1fr auto 1fr;
  grid-template-rows: auto 1fr auto;
}
.canvas { position: absolute; inset: 0; width: 100%; height: 100%; }
.grid-label { font-size: 15px; fill: #000; fill-opacity: .5; }
.dim-label { font-size: 15px; fill: #333; }

.toolbar {
  grid-area: 1 / 1 / 2 / 4;
  justify-self: start;
  position: relative;
  z-index: 2;
  display: flex;
  margin: 4px 0 0 4px;
  height: 75px;
  background: #dcdcdc;
}
.mode {
  width: 128px;
  justify-content: center;
  gap: 5px;
  padding-left: 10px;
  background:
    linear-gradient(#888, #888) 6px 26px / 1px 23px no-repeat,
    linear-gradient(#888, #888) 10px 26px / 1px 23px no-repeat,
    #adadad;
  color: #fff;
  font-weight: bold;
}
.mode .caret { color: #fff; }
.group {
  position: relative;
  display: flex;
  flex-direction: column;
  align-items: center;
  background: linear-gradient(#c4c4c4, #c4c4c4) right 4px / 2px 66px no-repeat;
}
.tools { display: flex; padding-top: 4px; margin-right: 3px; }
.tool { width: 48px; height: 48px; justify-content: center; }
.ico { width: 32px; height: 32px; color: #444; }
.active { background: #5a8ab5; border: 1px solid #4f7fab; }
.active .ico { color: #ddd; }
.g-sketch .tools { gap: 4px; }
.g-create .tool { width: 52px; }
.g-assemble .tool { width: 53px; }
.group-name { height: 16px; margin-top: 4px; gap: 4px; }
.group-name.open {
  width: 160px;
  height: 17px;
  margin-top: 3px;
  align-self: flex-start;
  justify-content: center;
  background: #6699cf;
  color: #fff;
}
.open .caret { color: #fff; }
.g-sketch { width: 162px; }
.g-create { width: 109px; }
.g-modify { width: 86px; }
.g-assemble { width: 110px; }
.g-construct { width: 113px; }
.g-inspect { width: 92px; }
.g-insert { width: 85px; }
.g-make { width: 71px; }
.g-addins { width: 92px; }
.g-select { width: 85px; }
.g-stop { width: 127px; background: none; padding-right: 9px; }
.g-stop .tools { margin-right: 0; padding-left: 6px; }

/* drop-down menu */
.menu {
  position: absolute;
  top: 72px;
  left: 0;
  width: 201px;
  padding: 2px 4px 0;
  background: #fff;
  border: 1px solid #808080;
  border-radius: 2px;
}
.item { position: relative; display: flex; align-items: center; height: 28px; }
.plain { height: 24px; padding-left: 20px; }
.mi { width: 16px; height: 16px; margin-right: 4px; color: #444; }
.item kbd { position: absolute; left: 155px; font: inherit; }
.sub { width: 6px; height: 9px; margin-left: auto; margin-right: 5px; }
.current { height: 30px; background: #bebebe; border-top: 1px solid #808080; }
.pin { width: 12px; height: 12px; margin-left: auto; margin-right: 7px; }
.rule { height: 1px; background: #808080; }
.marker { position: absolute; top: -8px; left: -4px; width: 202px; height: 40px; border: 5px solid #f00; }

.tooltip {
  position: absolute;
  top: 4px;
  left: 200px;
  width: 336px;
  padding: 28px 16px 20px 12px;
  border-radius: 12px;
  background: #515151;
  color: #fff;
  font: bold 13px/16px "DejaVu Sans Condensed", "DejaVu Sans", sans-serif;
}
.tooltip p { margin: 0 0 16px 4px; }
.demo { width: 304px; height: 188px; margin-top: 24px; }
.demo-num { font: 9px "Liberation Sans", sans-serif; fill: #333; }
.demo-text { font: 7px "DejaVu Sans", sans-serif; fill: #222; }
.demo-strong { font-weight: bold; font-family: "DejaVu Sans Condensed", sans-serif; }
.demo-hint { font: 8px "Liberation Sans", sans-serif; fill: #000; }

/* panels */
.bar {
  height: 25px;
  display: flex;
  align-items: center;
  background: #d2d2d2;
  border: 1px solid #aaa;
  color: #666;
}
.grip { width: 3px; height: 11px; border: 1px solid #888; border-width: 0 1px; }
.browser { grid-area: 2 / 1; position: relative; width: 300px; margin: 4px 0 0 4px; }
.browser .bar { padding-left: 4px; gap: 11px; }
.tree { padding-top: 5px; }
.node { display: flex; align-items: center; justify-content: space-between; height: 25px; margin: 0 20px 4px 37px; }
.root { margin-left: 18px; }
.leaf { justify-content: flex-end; }
.twist { width: 12px; height: 14px; }
.row { width: 225px; height: 25px; display: flex; align-items: center; background: #cacaca; padding-left: 4px; gap: 16px; }
.root .row { width: 243px; background: #808080; color: #fff; gap: 14px; }
.row.lit { padding-left: 5px; gap: 13px; }
.bulb { width: 12px; height: 16px; }
.on { color: #fbd94a; }
.off { color: #b8d0f2; }
.row .bulb { margin-left: 1px; }
.cube, .folder { width: 16px; height: 16px; }
.lit .folder { margin-right: 3px; }

.comments { grid-area: 3 / 1; align-self: end; position: relative; width: 300px; margin: 0 0 3px 4px; padding: 0 1px 0 26px; }
.plus { margin-left: auto; margin-right: 7px; }

.navbar { grid-area: 3 / 2; align-self: end; position: relative; display: flex; gap: 7px; margin-bottom: 3px; }
.nav-group { display: flex; align-items: center; gap: 10px; height: 30px; padding: 0 4px 0 5px; background: #c9c9c9; }
.nav-group button { gap: 6px; }
.nav-group .caret { width: 7px; }
.nav-group.wide { gap: 9px; }

.side { grid-area: 1 / 3 / 4 / 4; justify-self: end; position: relative; z-index: 1; display: flex; flex-direction: column; min-height: 0; padding: 28px 4px 3px 0; }
.viewcube {
  width: 54px;
  height: 54px;
  align-self: flex-end;
  margin-right: 23px;
  margin-bottom: 121px;
  justify-content: center;
  border: 1px solid #a2a2a2;
  background: linear-gradient(#d8dadf, #cccdd0) center / 34px 34px no-repeat, linear-gradient(#e8e8e8, #cfcfcf);
  box-shadow: 0 6px 6px -2px #aaa;
  color: #8d9199;
  font: bold 12px/16px "Liberation Sans", sans-serif;
}
.palette { width: 312px; flex: 1; min-height: 0; display: flex; flex-direction: column; border: 1px solid #aaa; background: #dcdcdc; }
.palette-bar { flex: none; height: 24px; border-width: 0 0 1px; padding: 0 4px 0 1px; gap: 6px; }
.expand { margin-left: auto; }
.palette-body { flex: 1; min-height: 0; display: flex; }
.palette-list { flex: 1; overflow: hidden; }
.palette-list h3 { height: 32px; display: flex; align-items: center; gap: 3px; padding-left: 2px; font-weight: bold; }
.fold { width: 10px; height: 8px; }
.opt { height: 32px; display: grid; grid-template-columns: 124px 16px; align-items: center; padding-left: 10px; }
.ci { width: 16px; height: 16px; }
.opt input {
  appearance: none;
  width: 16px;
  height: 16px;
  margin: 0;
  border: 1px solid #444;
  border-radius: 3px;
  background: linear-gradient(#b4b4b4, #f2f2f2);
  box-shadow: 0 1px #f4f4f4;
}
.opt input:not(:checked) { background: linear-gradient(#f4f4f4, #b9b9b9); }
.opt input:checked::before {
  content: "";
  display: block;
  width: 14px;
  height: 14px;
  background: #000;
  clip-path: polygon(2px 8px, 4px 7px, 6px 10px, 11px 1px, 12px 2px, 7px 12px, 5px 12px);
}
.scroll { width: 6px; margin-right: 2px; background: #bcbcc0; }
.thumb { height: 94%; background: #8f8f8f; border-radius: 3px; }
.palette-foot { flex: none; height: 45px; display: flex; align-items: center; justify-content: flex-end; padding-right: 17px; background: #d2d2d2; border-top: 1px solid #aaa; }
.stop-btn { height: 26px; padding: 0 3px; border: 1px solid #aaa; background: #e8e8e8; color: #666; font-size: 15px; }

/* timeline */
.timeline { flex: none; height: 27px; display: flex; align-items: flex-start; gap: 12px; padding: 17px 9px 0 11px; overflow: hidden; background: #cbcbcb; }
.feature { margin: -7px 0 0 11px; }
.gear { margin-left: auto; }
```
